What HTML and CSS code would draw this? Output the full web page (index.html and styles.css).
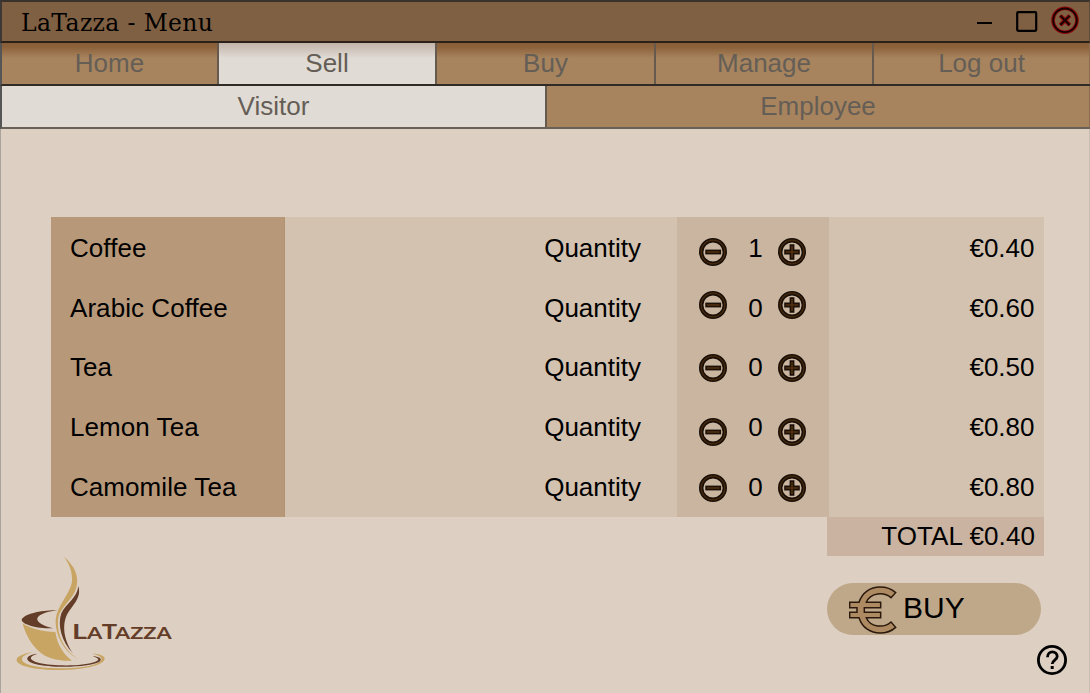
FILE: index.html
```html
<!DOCTYPE html>
<html lang="en">
<head>
<meta charset="utf-8">
<title>LaTazza - Menu</title>
<link rel="stylesheet" href="styles.css">
</head>
<body>
<svg class="defs" aria-hidden="true">
  <symbol id="minus" viewBox="0 0 28 28">
    <circle cx="14" cy="14" r="11.8" fill="none" stroke="#1a1008" stroke-width="4.4"/>
    <circle cx="14" cy="14" r="11.8" fill="none" stroke="#4c2b0d" stroke-width="1.2"/>
    <rect x="7.1" y="12.4" width="14.2" height="3.2" fill="#553010" stroke="#1a1008" stroke-width="1.6"/>
  </symbol>
  <symbol id="plus" viewBox="0 0 28 28">
    <circle cx="14" cy="14" r="11.8" fill="none" stroke="#1a1008" stroke-width="4.4"/>
    <circle cx="14" cy="14" r="11.8" fill="none" stroke="#4c2b0d" stroke-width="1.2"/>
    <path d="M12.4 7.1h3.2v5.3h5.4v3.2h-5.4v5.3h-3.2v-5.3H7v-3.2h5.4z" fill="#553010" stroke="#1a1008" stroke-width="1.6"/>
  </symbol>
</svg>
<div class="window">
  <header class="titlebar">
    <h1 class="title">LaTazza - Menu</h1>
    <svg class="controls" width="112" height="36" viewBox="0 0 112 36">
      <path d="M0 20h15" stroke="#000" stroke-width="2"/>
      <rect x="40.2" y="9.2" width="19" height="18.6" rx="1" fill="none" stroke="#000" stroke-width="2.2"/>
      <circle cx="88" cy="17.3" r="12" fill="none" stroke="#8d0808" stroke-width="3.6"/>
      <circle cx="88" cy="17.3" r="11.8" fill="none" stroke="#180202" stroke-width="1.8"/>
      <path d="M83.3 12.6l9.4 9.4M92.7 12.6l-9.4 9.4" stroke="#8d0808" stroke-width="4"/>
      <path d="M83.3 12.6l9.4 9.4M92.7 12.6l-9.4 9.4" stroke="#180202" stroke-width="2"/>
    </svg>
  </header>
  <nav class="tabs">
    <a class="tab">Home</a><a class="tab active">Sell</a><a class="tab">Buy</a><a class="tab">Manage</a><a class="tab">Log out</a>
  </nav>
  <nav class="tabs subtabs">
    <a class="tab active">Visitor</a><a class="tab">Employee</a>
  </nav>
  <main class="content">
    <section class="products">
      <div class="col names"><span>Coffee</span><span>Arabic Coffee</span><span>Tea</span><span>Lemon Tea</span><span>Camomile Tea</span></div>
      <div class="col labels"><span>Quantity</span><span>Quantity</span><span>Quantity</span><span>Quantity</span><span>Quantity</span></div>
      <div class="col steppers">
        <div class="stepper drop-a"><svg><use href="#minus"/></svg><b>1</b><svg><use href="#plus"/></svg></div>
        <div class="stepper drop-b"><svg><use href="#minus"/></svg><b>0</b><svg><use href="#plus"/></svg></div>
        <div class="stepper drop-c"><svg><use href="#minus"/></svg><b>0</b><svg><use href="#plus"/></svg></div>
        <div class="stepper drop-d"><svg><use href="#minus"/></svg><b>0</b><svg><use href="#plus"/></svg></div>
        <div class="stepper drop-e"><svg><use href="#minus"/></svg><b>0</b><svg><use href="#plus"/></svg></div>
      </div>
      <div class="col prices"><span>€0.40</span><span>€0.60</span><span>€0.50</span><span>€0.80</span><span>€0.80</span></div>
    </section>
    <div class="total">TOTAL €0.40</div>
    <footer class="bottom">
      <svg class="logo" width="170" height="130" viewBox="0 0 510 390">
        <path fill="#c8a563" d="M162 20C192 46 210 78 198 116C188 148 150 174 145 202C138 250 160 300 206 328C166 308 136 262 137 210C139 170 180 132 186 96C188 66 178 42 162 20Z"/>
        <path fill="#643d28" d="M205 108C214 138 196 158 178 182C156 212 156 262 189 310C154 276 142 224 154 190C168 160 202 144 205 108Z"/>
        <path fill="#643d28" d="M142 181C94 180 42 192 35 209C36 224 84 236 129 235C66 220 62 192 142 181Z"/>
        <path fill="#c8a563" d="M38 220C60 236 98 245 136 246C142 284 160 312 186 332C156 334 120 330 94 310C64 286 46 254 38 220Z"/>
        <path fill="#c8a563" d="M68 307C-10 318 2 358 140 360C246 360 294 338 282 321C274 312 256 311 246 311C270 316 280 324 272 333C254 350 204 355 150 355C26 354 10 322 68 307Z"/>
        <path fill="#643d28" d="M82 311C42 316 44 333 76 342C128 356 250 352 270 334C278 325 266 320 248 318C268 326 270 330 254 336C216 350 126 348 88 339C56 330 54 320 82 311Z"/>
        <g class="logo-text" fill="#643d28">
          <text x="186" y="267" font-size="62" textLength="45" lengthAdjust="spacingAndGlyphs">L</text>
          <text x="231" y="267" font-size="51" textLength="46" lengthAdjust="spacingAndGlyphs">A</text>
          <text x="275" y="267" font-size="62" textLength="46" lengthAdjust="spacingAndGlyphs">T</text>
          <text x="315" y="267" font-size="51" textLength="170" lengthAdjust="spacingAndGlyphs">AZZA</text>
        </g>
      </svg>
      <div class="actions">
        <button class="buy">
          <svg width="49" height="49" viewBox="0 0 147 147"><path d="M2 49H30C40 18 65 3 93 3C113 3 129 10 140 20L126 35C106 18 65 18 52 49H95V65H46V79H95V95H52C65 126 106 126 126 108L140 124C129 134 113 141 93 141C65 141 40 126 30 95H2V79H24V65H2Z" fill="#ae8a62" stroke="#2a190c" stroke-width="4.5"/></svg>
          <span>BUY</span>
        </button>
        <svg class="help" width="30" height="30" viewBox="0 0 30 30"><circle cx="15" cy="15" r="13.6" fill="none" stroke="#000" stroke-width="2.8"/><path d="M10.5 12.2C10.5 5 20.2 5.4 20.2 11.6C20.2 15 15.2 15.2 15.2 19" fill="none" stroke="#000" stroke-width="2.8"/><path d="M13.7 21h3v3h-3z"/></svg>
      </div>
    </footer>
  </main>
</div>
</body>
</html>
```
FILE: styles.css
```css
* { box-sizing: border-box; }
body { margin: 0; font-family: "Liberation Sans", Arial, sans-serif; font-size: 26px; color: #000; }
.defs { display: none; }
.window { width: 1090px; height: 693px; background: #ddcfc2; overflow: hidden; display: flex; flex-direction: column; }
.titlebar { height: 43px; flex: none; display: flex; align-items: flex-start; justify-content: space-between; background: #806043; border-top: 2px solid #39322d; border-bottom: 2px solid #2b2119; padding: 1px 0 0 19px; border-left: 2px solid #3d3834; border-right: 1px solid #5d4a39; }
.title { margin: 4px 0 0; font: 400 23.5px/33px "DejaVu Serif", serif; letter-spacing: 0.35px; }
.controls { flex: none; }
.tabs { height: 43px; flex: none; display: grid; grid-template-columns: 217px 218px 219px 218px 1fr; border-left: 2px solid #555; border-bottom: 2px solid #302b27; }
.tab { text-align: center; line-height: 41px; color: #655e56; background: linear-gradient(#875d37, #8e643d 5px, #a7845e 15px); border-right: 2px solid #665a4e; }
.tab:last-child { border-right: 1px solid #8b6d4d; }
.tab.active { background: linear-gradient(#c3b4a9, #ccc0b7 5px, #e0dbd5 15px); }
.subtabs { grid-template-columns: 545px 1fr; border-bottom-color: #696057; }
.subtabs .tab { background: #a7845e; line-height: 41px; }
.subtabs .tab.active { background: #e0dbd5; }
.content { flex: 1; padding: 88px 0 0 50px; border-left: 1px solid #aaa49e; border-right: 1px solid #c9bdb1; }
.products { display: grid; grid-template-columns: 234px 392px 152px 215px; width: 993px; height: 300px; }
.col { display: grid; grid-template-rows: 60px 59px 60px 60px 61px; line-height: 62px; background: #d3c2b0; }
.names { background: #b7997a; padding-left: 19px; border-right: 1px solid #b29270; letter-spacing: 0.06px; }
.labels { text-align: right; padding-right: 36px; }
.steppers { background: #cab5a0; padding: 0 22.6px 0 22.4px; }
.prices { text-align: right; padding-right: 9.5px; }
.stepper { display: flex; justify-content: space-between; align-items: flex-start; }
.stepper b { font-weight: 400; margin-left: 5.5px; margin-right: 0.5px; }
.stepper svg { width: 28px; height: 28px; }
.drop-a svg { margin-top: 20.5px; }
.drop-b svg { margin-top: 13.5px; }
.drop-c svg { margin-top: 18px; }
.drop-d svg { margin-top: 21.5px; }
.drop-e svg { margin-top: 18px; }
.total { width: 217px; height: 39px; margin-left: 776px; padding-right: 9px; text-align: right; line-height: 39px; letter-spacing: 0.1px; background: #cab3a0; }
.bottom { display: flex; justify-content: space-between; margin-left: -41px; }
.logo { margin-top: -6px; }
.logo-text { font-family: Lato, sans-serif; font-weight: 700; }
.actions { display: flex; flex-direction: column; width: 262px; padding-top: 27px; }
.buy { width: 214px; height: 52px; display: flex; align-items: center; border: 0; border-radius: 26px; background: #bfa88a; padding: 0 0 0 22px; font: 30px "Liberation Sans", Arial, sans-serif; color: #000; }
.buy span { margin-left: 5px; margin-top: -3px; }
.buy svg { margin-top: 3px; }
.help { margin: 10px 0 0 210px; }
```
